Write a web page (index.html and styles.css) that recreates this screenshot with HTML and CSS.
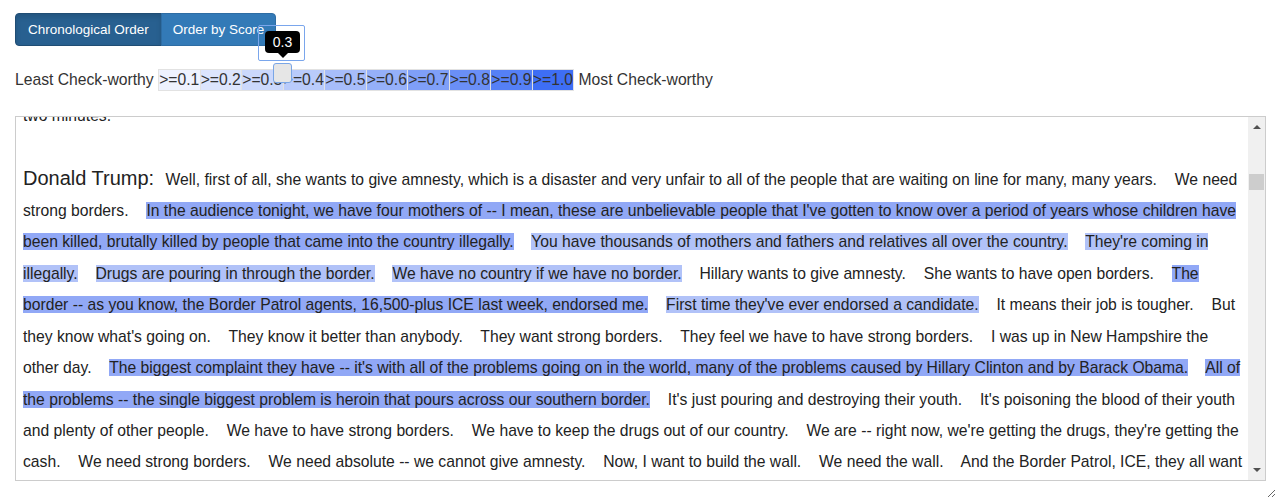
FILE: index.html
```html
<!DOCTYPE html>
<html lang="en">
<head>
<meta charset="utf-8">
<title>Debate transcript</title>
<link rel="stylesheet" href="styles.css">
</head>
<body>
<div class="page">
  <div class="btn-group">
    <button class="btn active" type="button">Chronological Order</button><button class="btn" type="button">Order by Score</button>
  </div>
  <div class="legend">Least Check-worthy <span class="scale"><span class="seg l1">&gt;=0.1</span><span class="seg l2">&gt;=0.2</span><span class="seg l3">&gt;=0.3</span><span class="seg l4">&gt;=0.4</span><span class="seg l5">&gt;=0.5</span><span class="seg l6">&gt;=0.6</span><span class="seg l7">&gt;=0.7</span><span class="seg l8">&gt;=0.8</span><span class="seg l9">&gt;=0.9</span><span class="seg l10">&gt;=1.0</span><span class="handle"></span><span class="tip-focus"><span class="tip">0.3</span></span></span> Most Check-worthy</div>
  <div class="pane">
    <div class="box">
      <div class="transcript" id="transcript">
        <p class="turn"><span class="speaker">Chris Wallace:</span> <span class="s">Good evening from the Thomas and Mack Center at the University of Nevada, Las Vegas.</span> <span class="s">I'm Chris Wallace of Fox News, and I welcome you to the third and final of the 2016 presidential debates between Secretary of State Hillary Clinton and Donald J. Trump.</span> <span class="s">This debate is sponsored by the Commission on Presidential Debates.</span> <span class="s">The commission has designed the format: six roughly 15-minute segments with two-minute answers to a question, and then open discussion for the rest of each segment.</span> <span class="s">Both campaigns have agreed to those rules.</span> <span class="s">For the record, I decided the topics and the questions in tonight's debate.</span> <span class="s">Those questions have not been shared with the commission or the two candidates.</span> <span class="s">The audience here in the hall has promised to remain silent.</span> <span class="s">No cheers, boos, or other interruptions, so we, and you, can focus on what the candidates have to say.</span></p>
        <p class="turn"><span class="speaker">Chris Wallace:</span> <span class="s">Let's move on to the subject of immigration.</span> <span class="s">And there is no issue that separates you more than the issue of immigration.</span> <span class="s">Actually, there are a lot of issues that separate you.</span> <span class="s">Mr. Trump, you want to build a wall.</span> <span class="s">Secretary Clinton, you have offered no specific plan for how you want to secure our southern border.</span> <span class="s">Mr. Trump, you are calling for major deportations.</span> <span class="s">Secretary Clinton, you say that within your first 100 days as president you're going to offer a package that includes a pathway to citizenship.</span> <span class="s">The question really is, why are you right and your opponent wrong?</span> <span class="s">Mr. Trump, you go first in this segment, and as with every other opening answer here tonight, you have<br>two minutes.</span></p>
        <p class="turn" id="focus-turn"><span class="speaker">Donald Trump:</span> <span class="s">Well, first of all, she wants to give amnesty, which is a disaster and very unfair to all of the people that are waiting on line for many, many years.</span> <span class="s">We need strong borders.</span> <span class="s hi">In the audience tonight, we have four mothers of -- I mean, these are unbelievable people that I've gotten to know over a period of years whose children have been killed, brutally killed by people that came into the country illegally.</span> <span class="s lo">You have thousands of mothers and fathers and relatives all over the country.</span> <span class="s lo">They're coming in illegally.</span> <span class="s lo">Drugs are pouring in through the border.</span> <span class="s lo">We have no country if we have no border.</span> <span class="s">Hillary wants to give amnesty.</span> <span class="s">She wants to have open borders.</span> <span class="s hi">The border -- as you know, the Border Patrol agents, 16,500-plus ICE last week, endorsed me.</span> <span class="s lo">First time they've ever endorsed a candidate.</span> <span class="s">It means their job is tougher.</span> <span class="s">But they know what's going on.</span> <span class="s">They know it better than anybody.</span> <span class="s">They want strong borders.</span> <span class="s">They feel we have to have strong borders.</span> <span class="s">I was up in New Hampshire the other day.</span> <span class="s hi">The biggest complaint they have -- it's with all of the problems going on in the world, many of the problems caused by Hillary Clinton and by Barack Obama.</span> <span class="s hi">All of the problems -- the single biggest problem is heroin that pours across our southern border.</span> <span class="s">It's just pouring and destroying their youth.</span> <span class="s">It's poisoning the blood of their youth and plenty of other people.</span> <span class="s">We have to have strong borders.</span> <span class="s">We have to keep the drugs out of our country.</span> <span class="s">We are -- right now, we're getting the drugs, they're getting the cash.</span> <span class="s">We need strong borders.</span> <span class="s">We need absolute -- we cannot give amnesty.</span> <span class="s">Now, I want to build the wall.</span> <span class="s">We need the wall.</span> <span class="s">And the Border Patrol, ICE, they all want the wall.</span> <span class="s">We stop the drugs.</span> <span class="s">We shore up the border.</span> <span class="s">One of my first acts will be to get all of the drug lords, all of the bad ones -- we have some bad, bad people in this country that have to go out.</span> <span class="s">We're going to get them out; we're going to secure the border.</span> <span class="s">And once the border is secured, at a later date, we'll make a determination as to the rest.</span> <span class="s">But we have some bad hombres here, and we're going to get them out.</span></p>
        <p class="turn"><span class="speaker">Chris Wallace:</span> <span class="s">Secretary Clinton?</span></p>
        <p class="turn"><span class="speaker">Hillary Clinton:</span> <span class="s">Well, as he was talking, I was thinking about a young girl I met here in Las Vegas, Carla, who is very worried that her parents might be deported, because she was born in this country but they were not.</span> <span class="s">They work hard, they do everything they can to give her a good life.</span> <span class="s">And you're right.</span> <span class="s">I don't want to rip families apart.</span> <span class="s">I don't want to be sending parents away from children.</span> <span class="s">I don't want to see the deportation force that Donald has talked about in this country.</span></p>
      </div>
      <div class="scrollbar" aria-hidden="true">
        <div class="sb-btn sb-up"></div>
        <div class="sb-track"><div class="sb-thumb"></div></div>
        <div class="sb-btn sb-down"></div>
      </div>
    </div>
  </div>
</div>
<script src="script.js"></script>
</body>
</html>
```
FILE: styles.css
```css
* { box-sizing: border-box; }
body {
  margin: 0;
  font-family: "Liberation Sans", Arial, sans-serif;
  color: #333;
  background: #fff;
}
.page { padding: 13px 13px 0 15px; }

.btn-group { display: flex; }
.btn {
  font-family: inherit;
  font-size: 13.5px;
  line-height: 19px;
  padding: 6px 12px;
  color: #fff;
  background: #337ab7;
  border: 1px solid #2e6da4;
  margin: 0;
}
.btn:first-child { border-radius: 4px 0 0 4px; }
.btn:last-child { border-radius: 0 4px 4px 0; margin-left: -1px; padding: 6px 11px; }
.btn.active {
  background: #286090;
  border-color: #204d74;
  box-shadow: inset 0 3px 5px rgba(0, 0, 0, 0.125);
}

.legend {
  margin-top: 23px;
  font-size: 15.7px;
  line-height: 22px;
  height: 22px;
  white-space: nowrap;
}
.scale { position: relative; display: inline-block; vertical-align: top; height: 22px; }
.seg {
  display: inline-block;
  vertical-align: top;
  height: 22px;
  line-height: 20px;
  padding: 0 0.2px;
  border: 1px solid #e2e2e2;
  border-left: none;
}
.seg.l1 { border-left: 1px solid #e2e2e2; }
.l1 { background: #eef2fe; }
.l2 { background: #dce5fd; }
.l3 { background: #cbd8fc; }
.l4 { background: #b9cbfb; }
.l5 { background: #a7bdfa; }
.l6 { background: #95b0f9; }
.l7 { background: #7f9ff8; }
.l8 { background: #6a8ff7; }
.l9 { background: #5580f6; }
.l10 { background: #3e6ef5; }

.handle {
  position: absolute;
  left: 115px;
  top: -6px;
  width: 19px;
  height: 20px;
  background: #e6e6e6;
  border: 1px solid #7aa6e6;
  border-radius: 3px;
}
.tip-focus {
  position: absolute;
  left: 100px;
  top: -44px;
  width: 47px;
  height: 36px;
  border: 1px solid #7aa6ec;
  border-radius: 2px;
}
.tip {
  position: absolute;
  left: 6px;
  top: 5px;
  width: 35px;
  height: 22px;
  background: #000;
  color: #fff;
  border-radius: 4px;
  font-size: 14px;
  line-height: 22px;
  text-align: center;
}
.tip::after {
  content: "";
  position: absolute;
  left: 50%;
  bottom: -5px;
  margin-left: -5px;
  border-left: 5px solid transparent;
  border-right: 5px solid transparent;
  border-top: 5px solid #000;
}

.pane {
  margin-top: 25px;
  width: 1261px;
  height: 382px;
  resize: both;
  overflow: hidden;
}
.box {
  display: flex;
  width: 1251px;
  height: 365px;
  border: 1px solid #ccc;
}
.transcript {
  flex: 1;
  min-width: 0;
  overflow: hidden;
  padding: 0 4px 0 7px;
  font-size: 15.7px;
  line-height: 31.4px;
  color: #222;
}
.scrollbar {
  flex: none;
  width: 17px;
  display: flex;
  flex-direction: column;
  background: #f0f0f0;
}
.sb-btn {
  flex: none;
  height: 17px;
  display: flex;
  align-items: center;
  justify-content: center;
}
.sb-up::before, .sb-down::before {
  content: "";
  width: 0;
  height: 0;
  border-left: 4px solid transparent;
  border-right: 4px solid transparent;
}
.sb-up::before { border-bottom: 4px solid #505050; margin-top: 2px; }
.sb-down::before { border-top: 4px solid #505050; margin-bottom: 3px; }
.sb-track { flex: 1; position: relative; }
.sb-thumb {
  position: absolute;
  left: 1px;
  right: 1px;
  top: 40px;
  height: 16px;
  background: #cdcdcd;
}
.turn { margin: 0 0 31.4px; }
.speaker { font-size: 20px; margin-right: 7px; }
.s { margin-right: 13.5px; }
.hi { background: #91a8f6; }
.lo { background: #b1c2f8; }
```
FILE: script.js
```js
var box = document.getElementById('transcript');
var turn = document.getElementById('focus-turn');
box.scrollTop = turn.offsetTop - box.offsetTop - 46;
```
